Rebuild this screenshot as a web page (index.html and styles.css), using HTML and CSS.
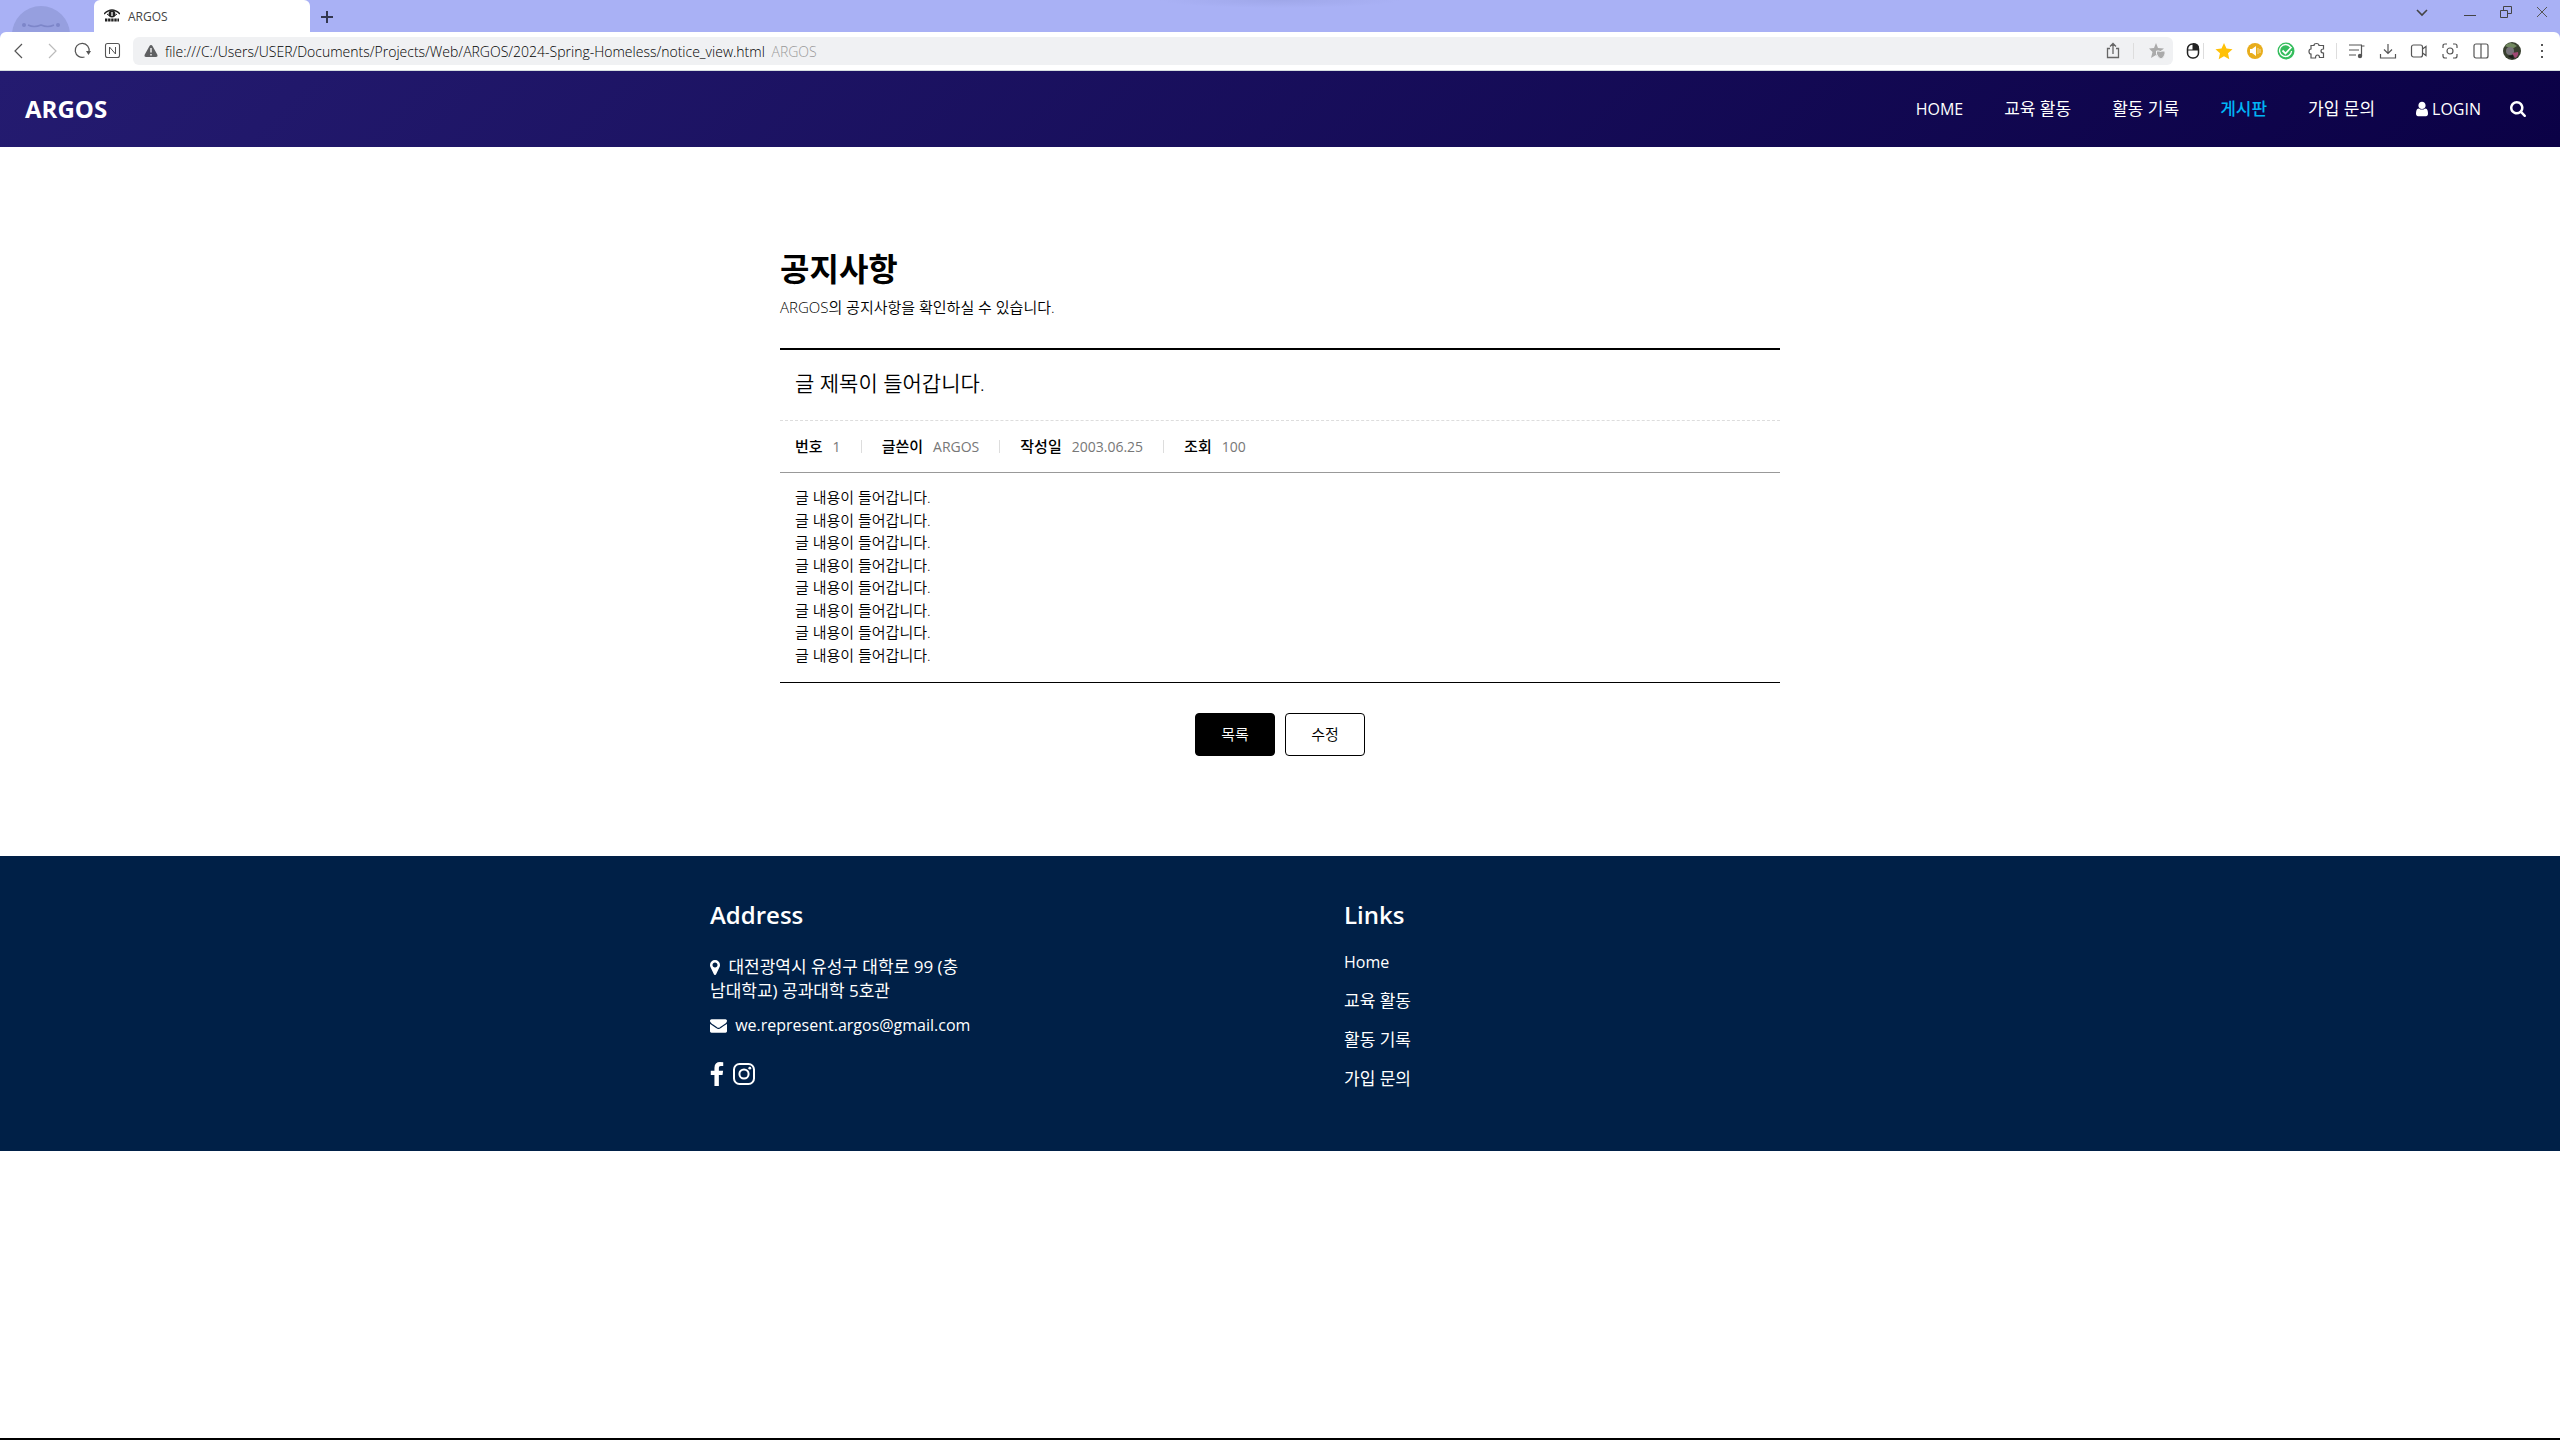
FILE: index.html
```
<!DOCTYPE html>
<html lang="ko">
<head>
  <meta charset="UTF-8" />
  <meta name="viewport" content="width=device-width, initial-scale=1.0" />
  <title>ARGOS</title>
  <link rel="stylesheet" href="styles.css">
</head>
<body>
  <!-- Browser -->
  <div class="browser">
    <div class="tab-strip">
      <svg class="mascot" width="58" height="26" viewBox="0 0 58 26">
        <circle cx="29" cy="29" r="29" fill="#969fdf"/>
        <circle cx="12" cy="19" r="2" fill="#7d86c9"/>
        <circle cx="46" cy="19" r="2" fill="#7d86c9"/>
        <path d="M16 19q6 3 13 0q7 3 13 0" fill="none" stroke="#7d86c9" stroke-width="1.5"/>
      </svg>
      <div class="tab">
        <svg width="16" height="14" viewBox="0 0 16 14">
          <path d="M0 5Q8-3 16 5" fill="none" stroke="#222" stroke-width="1.6"/>
          <path d="M3 5q5 5 10 0" fill="none" stroke="#222"/>
          <circle cx="8" cy="5" r="3.4" fill="#222"/>
          <path d="M7 3h2v4h-2z" fill="#aaa"/>
          <path d="M1 11h14" stroke="#222" stroke-width="3" stroke-dasharray="2.4 .7"/>
        </svg>
        <span>ARGOS</span>
      </div>
      <button class="new-tab" aria-label="새 탭">
        <svg width="12" height="12" viewBox="0 0 12 12"><path d="M6 0v12M0 6h12" stroke="#33364f" stroke-width="2"/></svg>
      </button>
      <div class="window-buttons">
        <button aria-label="탭 검색"><svg width="12" height="12" viewBox="0 0 12 12"><path d="M1 4l5 5 5-5" fill="none" stroke="#444" stroke-width="1.6"/></svg></button>
        <button aria-label="최소화"><svg width="12" height="12" viewBox="0 0 12 12"><path d="M0 9.500h12" stroke="#444"/></svg></button>
        <button aria-label="이전 크기로"><svg width="12" height="12" viewBox="0 0 12 12"><path d="M.5 4.500h7v7h-7zM3.500 4V.5h8v7H8" fill="none" stroke="#444"/></svg></button>
        <button aria-label="닫기"><svg width="12" height="12" viewBox="0 0 12 12"><path d="M1 1l10 10M11 1L1 11" stroke="#555"/></svg></button>
      </div>
    </div>

    <div class="toolbar">
      <div class="tools">
        <button aria-label="뒤로"><svg width="20" height="20" viewBox="0 0 20 20"><path d="M12 3L5 10l7 7" fill="none" stroke="#555" stroke-width="1.2"/></svg></button>
        <button aria-label="앞으로"><svg width="20" height="20" viewBox="0 0 20 20"><path d="M8 3l7 7-7 7" fill="none" stroke="#bbb" stroke-width="1.2"/></svg></button>
        <button aria-label="새로고침"><svg width="20" height="20" viewBox="0 0 20 20"><path d="M12.500 16A7 7 0 1 1 17 11" fill="none" stroke="#555" stroke-width="1.2"/><path d="M14 10h5l-2.500 4z" fill="#555"/></svg></button>
        <button aria-label="네이버"><svg width="20" height="20" viewBox="0 0 20 20"><rect x="2.500" y="2.500" width="14" height="14" rx="2" fill="none" stroke="#555" stroke-width="1.1"/><path d="M6.500 13V6l6 7V6" fill="none" stroke="#555"/></svg></button>
      </div>
      <div class="omnibox">
        <svg width="14" height="12" viewBox="0 0 14 12"><path d="M7 0q1 0 1.500 1l5 9q.5 2-1.500 2H2q-2 0-1.500-2l5-9Q6 0 7 0z" fill="#5f6062"/><path d="M7 3v4.500M7 9v1.500" stroke="#fff" stroke-width="1.300"/></svg>
        <p class="url">file:///C:/Users/USER/Documents/Projects/Web/ARGOS/2024-Spring-Homeless/notice_view.html <span>ARGOS</span></p>
        <button aria-label="공유"><svg width="20" height="20" viewBox="0 0 20 20"><path d="M7 7.500H4.500v9h11v-9H13M10 13V3M7 5.500l3-3 3 3" fill="none" stroke="#666" stroke-width="1.300"/></svg></button>
        <i class="bar"></i>
        <button class="favorite" aria-label="북마크"><svg width="20" height="20" viewBox="0 0 20 20"><path d="M9 2l2 5 6 .5-4.500 3.500L14 17l-5-3-5 3 1.500-6L2 7.500 7 7z" fill="#aaa"/><path d="M9.500 10h3l1 1 1-1h3.500v3q-1 4-4 5-3-1-4.500-5z" fill="#aaa" stroke="#f0f1f3"/></svg></button>
      </div>
      <div class="tools tools-right">
        <button aria-label="마우스 제스처"><svg width="24" height="20" viewBox="0 0 24 20"><rect x="6.500" y="3" width="11" height="14" rx="5" fill="#fff" stroke="#222" stroke-width="1.500"/><path d="M6 9h12M12 3v6" stroke="#222"/><path d="M12 2q7 0 6 7h-6z" fill="#222"/><path d="M22.500 2v16" stroke="#ddd"/></svg></button>
        <button aria-label="즐겨찾기"><svg width="18" height="18" viewBox="0 0 18 18"><path d="M9 1l2.500 5.500 6 .7-4.500 4 1.300 6L9 14.200l-5.300 3 1.300-6-4.500-4 6-.7z" fill="#ffc107"/></svg></button>
        <button aria-label="볼륨"><svg width="18" height="18" viewBox="0 0 18 18"><circle cx="9" cy="9" r="8" fill="#e8ad1c"/><path d="M4 7h2l4-3v10l-4-3H4z" fill="#fff"/><path d="M12 6v6M14 7v4" stroke="#f7dfa4"/></svg></button>
        <button aria-label="보안"><svg width="18" height="18" viewBox="0 0 18 18"><circle cx="9" cy="9" r="8.500" fill="#34bd5c"/><path d="M13.500 5A6 6 0 1 0 14.600 9" fill="none" stroke="#fff" stroke-width="1.300"/><path d="M5.500 8.500l3 3L14.500 5" fill="none" stroke="#fff" stroke-width="1.800"/></svg></button>
        <button aria-label="확장 프로그램"><svg width="18" height="18" viewBox="0 0 18 18"><path d="M6 3.500Q6 1.500 8.500 1.500T11 3.500h4.500V7Q13 7 13 9t2.500 2v4.500h-4Q11.500 13 9.500 13t-2 3H3v-4Q1 12 1 9.500T3 7V3.500z" fill="none" stroke="#555" stroke-width="1.200"/></svg></button>
        <i class="bar"></i>
        <button aria-label="음악"><svg width="18" height="18" viewBox="0 0 18 18"><path d="M1 3h13M1 8h10M1 13h7M16.500 4h-3v10" fill="none" stroke="#555" stroke-width="1.200"/><circle cx="12" cy="14" r="2.200" fill="#555"/></svg></button>
        <button aria-label="다운로드"><svg width="18" height="18" viewBox="0 0 18 18"><path d="M9 2v9M5 7.500l4 4 4-4M1.500 12v4h15v-4" fill="none" stroke="#555" stroke-width="1.200"/></svg></button>
        <button aria-label="녹화"><svg width="18" height="18" viewBox="0 0 18 18"><rect x="1.500" y="3" width="11" height="12" rx="2" fill="none" stroke="#555" stroke-width="1.200"/><path d="M12.500 7L16 4.500v9L12.500 11" fill="none" stroke="#555" stroke-width="1.200"/></svg></button>
        <button aria-label="캡처"><svg width="18" height="18" viewBox="0 0 18 18"><path d="M2 6V4q0-2 2-2h2M12 2h2q2 0 2 2v2M16 12v2q0 2-2 2h-2M6 16H4q-2 0-2-2v-2" fill="none" stroke="#555" stroke-width="1.200"/><circle cx="9" cy="9" r="3" fill="none" stroke="#555" stroke-width="1.200"/></svg></button>
        <button aria-label="화면 분할"><svg width="18" height="18" viewBox="0 0 18 18"><rect x="2" y="2" width="14" height="14" rx="2" fill="none" stroke="#555" stroke-width="1.200"/><path d="M9 2v14" stroke="#555" stroke-width="1.200"/></svg></button>
        <button class="profile" aria-label="프로필"><svg width="18" height="18" viewBox="0 0 18 18"><circle cx="9" cy="9" r="9" fill="#39402f"/><path d="M2 4q5-6 12 0l-5 3z" fill="#71885f"/><circle cx="7" cy="9" r="4" fill="#77737a"/><path d="M9 11l6-1q1 4-3 6z" fill="#a04873"/><path d="M5 14q3 3 6 3l-1-4z" fill="#1a1b19"/></svg></button>
        <button aria-label="메뉴"><svg width="18" height="18" viewBox="0 0 18 18"><path d="M7 2h2v2H7zM7 8h2v2H7zM7 14h2v2H7z" fill="#555"/></svg></button>
      </div>
    </div>
  </div>

  <!-- Navbar -->
  <header class="navbar">
    <a class="logo" href="#">ARGOS</a>
    <nav class="menu">
      <a class="en" href="#">HOME</a>
      <a href="#">교육 활동</a>
      <a href="#">활동 기록</a>
      <a class="active" href="#">게시판</a>
      <a href="#">가입 문의</a>
      <a class="en login" href="#">
        <svg width="12" height="16" viewBox="256 64 1280 1664" fill="#fff"><path d="M1536 1399q0 109-62.500 187t-150.500 78h-854q-88 0-150.500-78t-62.500-187q0-85 8.500-160.500t31.500-152 58.500-131 94-89 134.500-34.500q131 128 313 128t313-128q76 0 134.500 34.500t94 89 58.500 131 31.500 152 8.500 160.500zm-256-887q0 159-112.500 271.500t-271.500 112.500-271.500-112.500-112.500-271.500 112.500-271.500 271.500-112.500 271.500 112.500 112.500 271.500z"/></svg>
        LOGIN
      </a>
      <button class="search" aria-label="검색">
        <svg width="16" height="16" viewBox="64 128 1664 1664" fill="#fff"><path d="M1216 832q0-185-131.500-316.500t-316.500-131.500-316.500 131.500-131.500 316.500 131.500 316.500 316.500 131.500 316.500-131.500 131.500-316.500zm512 832q0 52-38 90t-90 38q-54 0-90-38l-343-342q-179 124-399 124-143 0-273.500-55.500t-225-150-150-225-55.500-273.500 55.500-273.500 150-225 225-150 273.500-55.500 273.500 55.500 225 150 150 225 55.500 273.500q0 220-124 399l343 343q37 37 37 90z"/></svg>
      </button>
    </nav>
  </header>

  <!-- Notice -->
  <main class="board">
    <div class="board-title">
      <h1>공지사항</h1>
      <p>ARGOS의 공지사항을 확인하실 수 있습니다.</p>
    </div>

    <article class="board-view">
      <h2>글 제목이 들어갑니다.</h2>
      <div class="info">
        <dl><dt>번호</dt><dd>1</dd></dl>
        <dl><dt>글쓴이</dt><dd>ARGOS</dd></dl>
        <dl><dt>작성일</dt><dd>2003.06.25</dd></dl>
        <dl><dt>조회</dt><dd>100</dd></dl>
      </div>
      <div class="cont">
        글 내용이 들어갑니다.<br>
        글 내용이 들어갑니다.<br>
        글 내용이 들어갑니다.<br>
        글 내용이 들어갑니다.<br>
        글 내용이 들어갑니다.<br>
        글 내용이 들어갑니다.<br>
        글 내용이 들어갑니다.<br>
        글 내용이 들어갑니다.
      </div>
    </article>

    <div class="board-buttons">
      <a class="on" href="#">목록</a>
      <a href="#">수정</a>
    </div>
  </main>

  <!-- Footer -->
  <footer class="footer">
    <div class="footer-inner">
      <section class="address">
        <h2>Address</h2>
        <p>
          <svg class="pin" width="10" height="15" viewBox="384 128 1024 1536" fill="#fff"><path d="M1152 640q0-106-75-181t-181-75-181 75-75 181 75 181 181 75 181-75 75-181zm256 0q0 109-33 179l-364 774q-16 33-47.500 52t-67.500 19-67.500-19-46.500-52l-365-774q-33-70-33-179 0-212 150-362t362-150 362 150 150 362z"/></svg>
          대전광역시 유성구 대학로 99 (충남대학교) 공과대학 5호관
        </p>
        <p class="en">
          <svg class="mail" width="17" height="14" viewBox="0 256 1792 1408" fill="#fff"><path d="M1792 710v794q0 66-47 113t-113 47h-1472q-66 0-113-47t-47-113v-794q44 49 101 87 362 246 497 345 57 42 92.500 65.500t94.500 48 110 24.500h2q51 0 110-24.500t94.500-48 92.500-65.500q170-123 498-345 57-39 100-87zm0-294q0 79-49 151t-122 123q-376 261-468 325-10 7-42.500 31t-54 38.500-52 32.500-57.500 27-50 9h-2q-23 0-50-9t-57.500-27-52-32.500-54-38.500-42.500-31q-91-64-262-182.500t-205-142.500q-62-42-117-115.500t-55-136.500q0-78 41.500-130t118.500-52h1472q65 0 112.500 47t47.500 113z"/></svg>
          we.represent.argos@gmail.com
        </p>
        <div class="social">
          <a href="#" aria-label="Facebook"><svg width="14" height="24" viewBox="479 0 864 1664" fill="#fff"><path d="M1343 12v264h-157q-86 0-116 36t-30 108v189h293l-39 296h-254v759h-306v-759h-255v-296h255v-218q0-186 104-288.500t277-102.500q147 0 228 12z"/></svg></a>
          <a href="#" aria-label="Instagram"><svg width="22" height="22" viewBox="0 0 22 22"><rect x="1" y="1" width="20" height="20" rx="5.500" fill="none" stroke="#fff" stroke-width="2"/><circle cx="11" cy="11" r="4.600" fill="none" stroke="#fff" stroke-width="2"/><circle cx="16.800" cy="5.200" r="1.400" fill="#fff"/></svg></a>
        </div>
      </section>
      <section class="links">
        <h2>Links</h2>
        <ul>
          <li><a class="en" href="#">Home</a></li>
          <li><a href="#">교육 활동</a></li>
          <li><a href="#">활동 기록</a></li>
          <li><a href="#">가입 문의</a></li>
        </ul>
      </section>
    </div>
  </footer>
</body>
</html>
```
FILE: styles.css
```
* {
  box-sizing: border-box;
  margin: 0;
  padding: 0;
}

body {
  min-height: 100vh;
  display: flex;
  flex-direction: column;
  background: #fff;
  color: #000;
  font-family: "Open Sans", "Noto Sans CJK KR", sans-serif;
  font-size: 15px;
  border-bottom: 2px solid #000;
}

a {
  color: inherit;
  text-decoration: none;
}

button {
  border: none;
  background: none;
  cursor: pointer;
}

svg {
  flex-shrink: 0;
}

ul {
  list-style: none;
}

/* Browser */
.browser {
  background: #a9b1f5;
  border-bottom: 1px solid #d5dde0;
}

.tab-strip {
  height: 32px;
  display: flex;
  padding-left: 12px;
  background: radial-gradient(ellipse 120px 8px at 50% 0, #9fa7e9, #a9b1f5);
}

.mascot {
  align-self: flex-end;
}

.tab {
  width: 216px;
  display: flex;
  align-items: center;
  gap: 8px;
  margin-left: 24px;
  padding: 0 10px;
  background: #fff;
  border-radius: 6px 6px 0 0;
  color: #444;
  font-size: 12px;
}

.new-tab {
  display: flex;
  align-items: center;
  padding: 2px 11px 0;
}

.window-buttons {
  display: flex;
  align-items: flex-start;
  margin-left: auto;
}

.window-buttons button {
  width: 36px;
  height: 26px;
}

.window-buttons button:first-child {
  margin-right: 12px;
}

.toolbar {
  height: 38px;
  display: flex;
  align-items: center;
  padding: 0 2px 0 4px;
  background: #fff;
  border-radius: 6px 6px 0 0;
}

.tools {
  display: flex;
  align-items: center;
}

.tools button {
  width: 31px;
  height: 28px;
  display: flex;
  align-items: center;
  justify-content: center;
}

.bar {
  width: 1px;
  height: 16px;
  margin: 0 4px;
  background: #ddd;
}

.omnibox {
  flex: 1;
  height: 28px;
  display: flex;
  align-items: center;
  margin: 0 4px 0 5px;
  padding: 0 0 0 11px;
  background: #f0f1f3;
  border-radius: 6px;
}

.omnibox button {
  display: flex;
  margin: 0 6px;
}

.omnibox .favorite {
  margin-left: 9px;
}

.url {
  flex: 1;
  padding-left: 7px;
  font-size: 14px;
  font-weight: 350;
}

.url span {
  margin-left: 3px;
  color: #999;
}

/* Navbar */
.navbar {
  height: 76px;
  display: flex;
  align-items: center;
  justify-content: space-between;
  padding: 0 25px;
  background: linear-gradient(135deg, #241b70, #0b0146);
  color: #fff;
}

.logo {
  font-size: 24px;
  line-height: 32px;
  font-weight: bold;
}

.menu {
  display: flex;
  align-items: center;
  gap: 41px;
  font-size: 17px;
  line-height: 24px;
}

.en {
  font-size: 16px;
}

.menu .active {
  color: #00b4f5;
  font-weight: 500;
}

.login {
  display: flex;
  align-items: center;
  gap: 4px;
}

.search {
  display: flex;
  margin: 0 9px 0 -12px;
}

/* Notice */
.board {
  width: 1000px;
  max-width: 100%;
  margin: 0 auto;
  padding: 100px 0;
}

.board-title {
  padding-bottom: 29px;
}

.board-title h1 {
  font-size: 32px;
  line-height: 44px;
  font-weight: 600;
}

.board-title p {
  margin-top: 5px;
  line-height: 23px;
  font-weight: 350;
}

.board-view {
  border-top: 2px solid #000;
  border-bottom: 1px solid #000;
}

.board-view h2 {
  padding: 18px 15px 22px;
  border-bottom: 1px dashed #ddd;
  font-size: 21px;
  line-height: 30px;
  font-weight: 350;
}

.info {
  display: flex;
  padding: 15px;
  border-bottom: 1px solid #999;
}

.info dl {
  display: flex;
  align-items: center;
  line-height: 21px;
}

.info dl + dl::before {
  content: "";
  height: 13px;
  margin: 0 20px;
  border-left: 1px solid #ddd;
}

.info dt {
  font-weight: 500;
}

.info dd {
  margin-left: 10px;
  color: #777;
  font-size: 14px;
}

.cont {
  padding: 13px 15px 16px;
  line-height: 1.5;
  font-weight: 350;
}

.board-buttons {
  display: flex;
  justify-content: center;
  gap: 10px;
  margin-top: 30px;
}

.board-buttons a {
  width: 80px;
  padding: 10px 0;
  border: 1px solid #000;
  border-radius: 4px;
  line-height: 21px;
  text-align: center;
  font-weight: 350;
}

.board-buttons .on {
  background: #000;
  color: #fff;
}

/* Footer */
.footer {
  background: #002047;
  color: #fff;
}

.footer-inner {
  width: 1140px;
  max-width: 100%;
  display: grid;
  grid-template-columns: 634px 1fr;
  margin: 0 auto;
  padding: 42px 0 45px;
}

.footer h2 {
  font-size: 24px;
  line-height: 34px;
  font-weight: 600;
}

.address p {
  width: 265px;
  margin-top: 10px;
  padding-right: 10px;
  font-size: 17px;
  line-height: 24px;
}

.address h2 + p {
  margin-top: 23px;
  word-break: break-all;
}

.address .en {
  padding: 0;
  font-size: 16px;
}

.pin,
.mail {
  margin-right: 4px;
  vertical-align: -2px;
}

.social {
  display: flex;
  align-items: center;
  gap: 9px;
  margin-top: 25px;
}

.social a {
  display: flex;
}

.links ul {
  margin-top: 18px;
  font-size: 17px;
}

.links li {
  margin-bottom: 15px;
  line-height: 24px;
}
```
